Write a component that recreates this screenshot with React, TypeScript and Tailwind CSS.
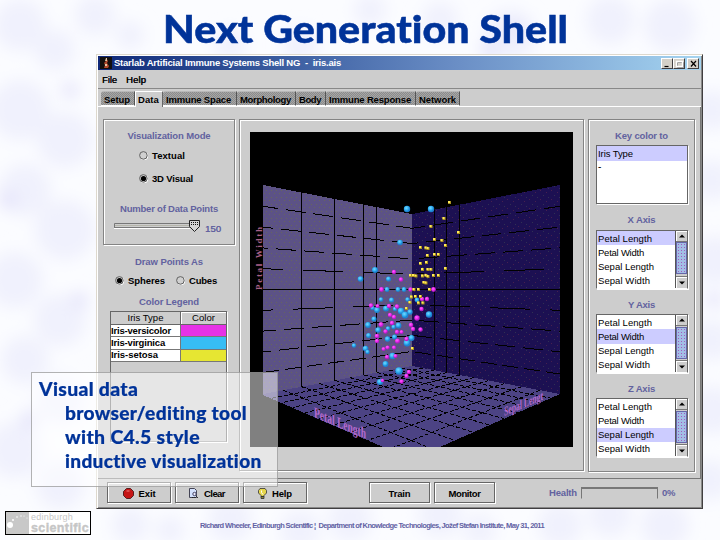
import { useLayoutEffect, useRef, useState } from "react";
import type { ReactNode } from "react";

/* Text whose tracking is adjusted so that it takes exactly `w` pixels. */
function Fit({ w, children, className = "" }: { w: number; children: string; className?: string }) {
  const ref = useRef<HTMLSpanElement>(null);
  const [gap, setGap] = useState(0);
  useLayoutEffect(() => {
    const el = ref.current;
    if (el) setGap((w - el.getBoundingClientRect().width) / children.length);
  }, [w, children]);
  return (
    <span ref={ref} className={`inline-block shrink-0 whitespace-pre ${className}`} style={{ letterSpacing: gap }}>
      {children}
    </span>
  );
}

/* Display text whose letters are widened to take exactly `w` pixels. */
function Wide({ w, children, className = "" }: { w: number; children: string; className?: string }) {
  const ref = useRef<HTMLSpanElement>(null);
  const [scale, setScale] = useState(1);
  useLayoutEffect(() => {
    if (ref.current) setScale(w / ref.current.offsetWidth);
  }, [w, children]);
  return (
    <span
      ref={ref}
      className={`inline-block shrink-0 origin-left self-start whitespace-pre [font-variant-ligatures:none] ${className}`}
      style={{ transform: `scaleX(${scale})` }}
    >
      {children}
    </span>
  );
}

const etched = "border border-[#848484] shadow-[1px_1px_0_#fff,inset_1px_1px_0_#fff]";

function Tab({ w, t, label, active = false }: { w: number; t: number; label: string; active?: boolean }) {
  return (
    <div
      className={
        active
          ? "flex h-[16px] items-center border-t border-l border-r border-t-white border-l-white border-r-[#666] bg-[#cdcdcd] pl-[2px]"
          : "flex h-[15px] items-center rounded-tl-[3px] border-t border-r border-t-[#b8b8b8] border-r-[#555] border-b border-b-white bg-[#999] bg-[repeating-conic-gradient(#8b8b8b_0_25%,#a6a6a6_0_50%)] bg-[length:2px_2px] pt-[2px] pl-[3px]"
      }
      style={{ width: w }}
    >
      <Fit w={t}>{label}</Fit>
    </div>
  );
}

function Heading({ w, children, className = "" }: { w: number; children: string; className?: string }) {
  return (
    <div className={`flex h-[12px] items-center justify-center pt-[2px] text-[#62629f] ${className}`}>
      <Fit w={w}>{children}</Fit>
    </div>
  );
}

function Radio({ on = false, w, label }: { on?: boolean; w: number; label: string }) {
  return (
    <div className="flex h-[12px] items-center gap-[4px]">
      <svg width="9" height="9" viewBox="0 0 9 9">
        <circle cx="5" cy="5" r="3.9" fill="none" stroke="#fff" />
        <circle cx="4.4" cy="4.4" r="3.8" fill="#d0d0d0" stroke="#555" strokeWidth="0.9" />
        {on && <circle cx="4.5" cy="4.5" r="2.6" fill="#000" />}
      </svg>
      <div className="flex pt-[1px]"><Fit w={w}>{label}</Fit></div>
    </div>
  );
}

function ScrollBar({ top }: { top: number }) {
  return (
    <div className="flex w-[12px] flex-col border-l border-[#555] bg-[#cdcdcd]">
      <div className="flex h-[11px] items-center justify-center border-b border-[#777] shadow-[inset_1px_1px_0_#fff]">
        <svg width="6" height="4"><path d="M0 3.5 3 0.5 6 3.5Z" /></svg>
      </div>
      <div className="flex-1" style={{ paddingTop: top }}>
        <div className="h-[32px] border border-[#6666aa] bg-[#8e98c8] bg-[radial-gradient(#a45cbc_0.7px,transparent_0.9px),radial-gradient(#a4bfe6_0.7px,transparent_1px)] bg-[length:3px_3px,2px_2px]" />
      </div>
      <div className="flex h-[12px] items-center justify-center border-t border-[#777] shadow-[inset_1px_1px_0_#fff]">
        <svg width="6" height="4"><path d="M0 0.5 3 3.5 6 0.5Z" /></svg>
      </div>
    </div>
  );
}

const AXES: [string, number][] = [["Petal Length", 54], ["Petal Width", 46], ["Sepal Length", 56], ["Sepal Width", 52]];

function AxisList({ selected, thumb }: { selected: number; thumb: number }) {
  return (
    <div className="ml-[7px] flex h-[59px] w-[92px] border border-[#666] border-b-white bg-white shadow-[1px_1px_0_#fff]">
      <div className="flex-1 font-normal">
        {AXES.map(([name, w], i) => (
          <div
            key={name}
            className={`flex h-[14.25px] items-center pt-[1px] pl-[1px] ${i === selected ? "bg-[#ccccff]" : ""}`}
          >
            <Fit w={w}>{name}</Fit>
          </div>
        ))}
      </div>
      <ScrollBar top={thumb} />
    </div>
  );
}

function Button({ w, t, label, icon }: { w: number; t: number; label: string; icon?: ReactNode }) {
  return (
    <div
      className="flex h-[21px] items-center justify-center gap-[5px] border border-[#666] pt-[2px] shadow-[1px_1px_0_#fff,inset_1px_1px_0_#fff]"
      style={{ width: w }}
    >
      {icon}
      <Fit w={t}>{label}</Fit>
    </div>
  );
}

/* Projective map of the unit square onto the floor: back, right, front, left corners. */
const floorPoint = (u: number, v: number): [number, number] => {
  const [x0, y0, x1, y1, x2, y2, x3, y3] = [412, 366, 560, 394, 411, 460, 263, 394];
  const sx = x0 - x1 + x2 - x3;
  const sy = y0 - y1 + y2 - y3;
  const d = (x1 - x2) * (y3 - y2) - (x3 - x2) * (y1 - y2);
  const g = (sx * (y3 - y2) - (x3 - x2) * sy) / d;
  const h = ((x1 - x2) * sy - sx * (y1 - y2)) / d;
  const k = g * u + h * v + 1;
  return [
    ((x1 - x0 + g * x1) * u + (x3 - x0 + h * x3) * v + x0) / k,
    ((y1 - y0 + g * y1) * u + (y3 - y0 + h * y3) * v + y0) / k,
  ];
};

const BLUE = [
  [407, 209, 3], [431, 209, 3], [400, 242.5, 2.6], [375, 270, 2.8], [360.5, 279, 2.6], [388.5, 279, 2.3],
  [387, 289.5, 2.2], [398, 289.5, 2.2], [404, 289.5, 2.2], [381, 299.5, 2], [391.5, 300, 2.3], [407.5, 299.5, 2], [417, 300, 2.2],
  [372.5, 308, 2], [377, 310, 2.7], [386, 308.5, 2.8], [395, 309, 2], [401, 311, 3], [405, 315, 3.2], [410, 312, 2.5], [429, 314.5, 3],
  [374, 319, 2.4], [368, 325, 2.7], [378, 330, 2.6], [388, 328.5, 2], [393.5, 327, 2], [398.5, 325.5, 2.7],
  [368.5, 335.5, 2.3], [387.5, 339, 2.5], [394.5, 337, 2.3], [411.5, 338, 2.8], [407, 343, 3.2], [354, 345.5, 2],
  [365.5, 348.5, 2.6], [367.5, 352, 2], [392.5, 356, 3], [385.5, 364, 2.7], [399, 371, 3.6], [380, 382, 2.8],
];
const PINK = [
  [394, 272, 2], [401, 279.5, 2], [381.5, 289.5, 2.2], [410.5, 289.5, 2], [433.5, 289.5, 2.2], [422, 299, 2], [427, 299, 2],
  [371, 305.5, 2], [377.5, 306, 1.8], [389, 306, 2], [397, 306.5, 2], [421.5, 309, 2], [390, 315, 2], [394, 317, 2], [417, 318, 2.5],
  [381, 324.5, 2.2], [392, 323, 2], [385.5, 331.5, 2], [397, 332, 2], [401.5, 332, 1.8], [411, 325, 2.1], [413, 329, 2], [420.5, 329.5, 2],
  [377, 336, 2.1], [377, 341, 2], [397.5, 341, 2.3], [406.5, 339, 2], [387.5, 347.5, 1.9], [383.5, 349, 1.8], [394, 347.5, 1.9],
  [387, 357, 2], [395.5, 356, 1.8], [409, 372, 2], [406.5, 376, 2], [401.5, 381.5, 2], [382.5, 380.5, 1.6],
];
const GOLD = [
  [449.5, 202.5], [444, 218.5], [431, 226.5], [458.5, 232.5], [434.5, 239.5], [442, 240.5], [445.5, 245.5], [420.5, 247.5],
  [426, 248], [428, 248.5], [427.5, 255.5], [434.5, 254.5], [438.5, 254.5], [420.5, 263.5], [426.5, 262.5], [422.5, 269.5],
  [428, 269.5], [431, 269.5], [445.5, 268.5], [410.5, 275.5], [413.5, 275.5], [416, 276], [422.5, 276], [426, 275.5],
  [428, 276.5], [433.5, 275.5], [438.5, 275.5], [424, 282.5], [426, 283], [414, 289.5], [418.5, 289.5], [429.5, 289.5],
  [411.5, 297], [415.5, 296.5], [420.5, 296.5], [410, 302.5], [418.5, 303], [423, 303], [406.5, 308.5], [412.5, 348.5],
];

function Plot() {
  const rows = [1, 2, 3, 4, 5, 6, 7, 8];
  const line = ([a, b]: [number, number], [c, d]: [number, number]) => `M${a} ${b}L${c} ${d}`;
  return (
    <svg width="323" height="315" viewBox="250 132 323 315" className="block bg-black">
      <defs>
        <pattern id="olive" width="5" height="7" patternUnits="userSpaceOnUse">
          <path d="M1 1h1v1h-1zM4 4h1v1h-1z" fill="#66665d" />
        </pattern>
        <pattern id="wine" width="11" height="9" patternUnits="userSpaceOnUse">
          <path d="M1 1h1v1h-1zM7 3h1v1h-1z" fill="#47204f" />
          <path d="M4 6h1v1h-1zM9 8h1v1h-1z" fill="#303053" />
        </pattern>
        <radialGradient id="blue" cx="40%" cy="35%">
          <stop offset="0" stopColor="#76d8ff" /><stop offset="0.6" stopColor="#35b3f3" /><stop offset="1" stopColor="#1c84d2" />
        </radialGradient>
        <radialGradient id="pink" cx="40%" cy="35%">
          <stop offset="0" stopColor="#ff66ff" /><stop offset="0.7" stopColor="#eb27ee" /><stop offset="1" stopColor="#b81cc8" />
        </radialGradient>
      </defs>
      <g shapeRendering="crispEdges">
        <path d="M263 185 412 214V366L263 394Z" fill="#5c5286" />
        <path d="M263 185 412 214V366L263 394Z" fill="url(#olive)" />
        <path d="M412 214 560 185V394L412 366Z" fill="#1c1052" />
        <path d="M412 214 560 185V394L412 366Z" fill="url(#wine)" />
        <path d="M412 366 560 394 440 447H383L263 395V394Z" fill="#4c4384" />
        <g stroke="#000" fill="none">
          {rows.map((i) => {
            const y = 185.5 + i * 20.8;
            const m = 213 + i * 15.3;
            return i === 5 ? (
              <path key={i} d="M263 289.5H560" />
            ) : (
              <g key={i} strokeDasharray={i === 4 || i === 6 ? "40 20" : "20 8"}>
                <path d={`M263 ${y}L412 ${m}`} strokeDashoffset={i * 5} />
                <path d={`M412 ${m}L560 ${y}`} strokeDashoffset={i * 7} />
              </g>
            );
          })}
          <path d="M263 372.5L412 351.5 560 374" strokeDasharray="16 6" />
          <path d="M301.5 192V387M334.5 199V381M363.5 204V375M376.5 207V372M434.5 210V370M446.5 207V373M459.5 205V375" />
          {[1, 2, 3, 4, 5, 6, 7, 8, 9].map((i) => (
            <g key={i} strokeDasharray="4 2">
              <path d={line(floorPoint(i / 10, 0), floorPoint(i / 10, 1))} />
              <path d={line(floorPoint(0, i / 10), floorPoint(1, i / 10))} />
            </g>
          ))}
        </g>
      </g>
      {BLUE.map(([x, y, r], i) => <circle key={i} cx={x} cy={y} r={r + 0.2} fill="url(#blue)" />)}
      {PINK.map(([x, y, r], i) => <circle key={i} cx={x} cy={y} r={r + 0.2} fill="url(#pink)" />)}
      {GOLD.map(([x, y], i) => (
        <g key={i}>
          <rect x={x - 1.5} y={y - 1.5} width="3" height="3" fill="#a8901f" />
          <rect x={x - 1.5} y={y - 1.5} width="2" height="2" fill="#ffea58" />
        </g>
      ))}
      <g fill="#b46ace" fontFamily="Liberation Serif, serif" fontSize="13">
        <text transform="translate(262 290) rotate(-90)" fontSize="9" textLength="63" fill="#a86088">Petal Width</text>
        <text transform="matrix(1 0.42 0 1 314 417)" textLength="52" lengthAdjust="spacingAndGlyphs" fontSize="15">Petal Length</text>
        <text transform="matrix(1 -0.42 0 1 504 416)" textLength="39" lengthAdjust="spacingAndGlyphs">Sepal Lengt</text>
      </g>
    </svg>
  );
}

const LEGEND: [string, number, string][] = [
  ["Iris-versicolor", 60, "bg-[#e632e6]"],
  ["Iris-virginica", 54, "bg-[#37bdf5]"],
  ["Iris-setosa", 47, "bg-[#e6e632]"],
];

function Backdrop() {
  return (
    <svg className="absolute inset-0" width="720" height="540">
      <defs>
        <filter id="soft" x="-50%" y="-50%" width="200%" height="200%"><feGaussianBlur stdDeviation="8" /></filter>
      </defs>
      <rect width="720" height="540" fill="#fbfcff" />
      <g filter="url(#soft)" fill="#f0f1fd">
        {[
          [20, 25, 26], [55, 50, 20], [95, 15, 20], [20, 110, 30], [65, 140, 28], [25, 190, 26], [65, 230, 30], [15, 280, 28],
          [60, 320, 26], [25, 360, 24], [60, 400, 24], [15, 450, 28], [60, 485, 24], [130, 525, 18], [170, 530, 14], [230, 520, 22],
          [300, 530, 20], [350, 520, 22], [440, 515, 22], [480, 530, 16], [560, 525, 22], [610, 515, 22], [665, 525, 24],
          [710, 480, 20], [712, 410, 24], [712, 340, 20], [715, 260, 24], [712, 180, 20], [712, 110, 20], [670, 25, 26],
          [610, 20, 24], [510, 35, 26], [440, 20, 18], [370, 10, 16], [300, 45, 18], [230, 45, 16], [130, 35, 14],
        ].map(([x, y, r], i) => <circle key={i} cx={x} cy={y} r={r} />)}
        <g fill="#e3e2fa">
          <circle cx="515" cy="30" r="9" /><circle cx="490" cy="50" r="9" /><circle cx="8" cy="200" r="9" /><circle cx="70" cy="90" r="8" />
          <circle cx="30" cy="420" r="9" /><circle cx="80" cy="300" r="8" /><circle cx="714" cy="300" r="8" />
        </g>
      </g>
    </svg>
  );
}

export default function App() {
  return (
    <div className="relative h-[540px] w-[720px] overflow-hidden bg-[#fafbff] font-['Liberation_Sans',sans-serif] text-[9.5px] leading-[12px] font-bold text-black">
      <Backdrop />
      <div className="relative flex h-full flex-col">
        <header className="flex h-[54px] pt-[5px] pl-[163px] font-['Lato',sans-serif] text-[37.5px] leading-[48px] font-black text-[#003399] [-webkit-text-stroke:0.5px_#003399]">
          <Wide w={405}>Next Generation Shell</Wide>
        </header>

        <main className="ml-[96px] flex h-[455px] w-[607px] flex-col border-t border-l border-r border-b border-t-[#ddd8cd] border-l-[#ddd8cd] border-r-[#403e40] border-b-[#403e40] bg-[#cdcdcd] shadow-[inset_1px_1px_0_#fff,inset_-1px_-1px_0_#888]">
          <div className="mx-[1px] mt-[1px] flex h-[14px] items-center bg-linear-to-r from-[#102878] via-[#6b8fc6] via-60% to-[#a5d4f0] text-white">
            <svg className="ml-[2px] mr-[2px]" width="12" height="12">
              <rect width="12" height="12" fill="#14100e" />
              <path d="M6 1 8 4 7 6 9 9 8 11H4L5 8 4 6 6 4Z" fill="#b3482c" />
              <path d="M6 1h1v3H5zM5 7h2v2H5z" fill="#e6c7a4" />
            </svg>
            <Fit w={227}>Starlab Artificial Immune Systems Shell NG  -  iris.ais</Fit>
            <div className="ml-auto flex pr-[2px]">
              {["M2.5 7.5h4", "M2.5 2.5h6v5h-6z", "M3 2 8 7.5M8 2 3 7.5"].map((d, i) => (
                <svg key={d} width="12" height="11" className={`border border-white border-r-[#403e40] border-b-[#403e40] bg-[#d4d0c8] ${i === 2 ? "ml-[2px]" : ""}`}>
                  {i === 1 && <path d="M3.5 3.5h6v5h-6z" fill="none" stroke="#888" />}
                  <path d={d} fill="none" stroke={i === 1 ? "#fff" : "#000"} strokeWidth={i === 1 ? 1.4 : 1.2} />
                </svg>
              ))}
            </div>
          </div>
          <nav className="mx-[1px] flex h-[19px] items-center gap-[9px] border-b border-[#888] pt-[2px] pl-[4px] text-[9.5px] font-normal [text-shadow:0.3px_0_0_#000]">
            <Fit w={15}>File</Fit>
            <Fit w={20}>Help</Fit>
          </nav>
          <div className="mx-[1px] flex h-[18px] items-end border-b border-white pl-[3px]">
            <Tab w={34} t={26} label="Setup" />
            <div className="-mb-[1px]"><Tab w={28} t={21} label="Data" active /></div>
            <Tab w={74} t={65} label="Immune Space" />
            <Tab w={59} t={51} label="Morphology" />
            <Tab w={30} t={22} label="Body" />
            <Tab w={90} t={82} label="Immune Response" />
            <Tab w={44} t={37} label="Network" />
          </div>

          <section className="mx-[1px] flex h-[372px] gap-[4px] border-r border-b border-[#777] pt-[12px] pl-[5px]">
            <div className="flex w-[132px] flex-col">
              <div className={`h-[126px] ${etched}`}>
                <Heading w={83} className="mt-[9px]">Visualization Mode</Heading>
                <div className="mt-[8px] flex flex-col gap-[11px] pl-[35px]">
                  <Radio w={33} label="Textual" />
                  <Radio on w={41} label="3D Visual" />
                </div>
                <Heading w={98} className="mt-[18px]">Number of Data Points</Heading>
                <div className="mt-[3px] flex items-center pl-[10px]">
                  <svg width="87" height="14">
                    <path d="M0.5 8V4.5H76" fill="none" stroke="#777" />
                    <path d="M1 6.5H76" stroke="#b5b5aa" />
                    <path d="M0 8.5H76" stroke="#777" />
                    <path d="M0 9.5H76" stroke="#fff" />
                    <path d="M75.5 1.5h10v6l-5 5-5-5z" fill="#d4d4d4" stroke="#222" />
                    <path d="M77 3.5h7M77 5.5h7" stroke="#111" strokeDasharray="1 1" />
                  </svg>
                  <span className="ml-[4px] flex pt-[6px] font-normal text-[#62629f] [text-shadow:0.3px_0_0_#62629f]"><Fit w={16}>150</Fit></span>
                </div>
              </div>
              <Heading w={68} className="mt-[10px]">Draw Points As</Heading>
              <div className="mt-[7px] flex gap-[11px] pl-[12px]">
                <Radio on w={37} label="Spheres" />
                <Radio w={28} label="Cubes" />
              </div>
              <Heading w={60} className="mt-[9px]">Color Legend</Heading>
              <div className="mt-[4px] ml-[7px] h-[131px] w-[117px] border border-[#666] border-b-[#999] shadow-[1px_1px_0_#fff]">
                <div className="flex h-[13px] border-b border-[#666] font-normal">
                  <div className="flex w-[70px] items-center justify-center border-r border-[#666]"><Fit w={36}>Iris Type</Fit></div>
                  <div className="flex flex-1 items-center justify-center shadow-[inset_1px_1px_0_#fff]"><Fit w={23}>Color</Fit></div>
                </div>
                {LEGEND.map(([name, w, color]) => (
                  <div key={name} className="flex h-[12.3px] w-[115px] border-b border-[#777] bg-white">
                    <div className="flex w-[70px] items-center border-r border-[#777]"><Fit w={w}>{name}</Fit></div>
                    <div className={`flex-1 ${color}`} />
                  </div>
                ))}
              </div>
            </div>

            <div className={`h-[352px] w-[345px] pt-[12px] pl-[10px] ${etched}`}>
              <Plot />
            </div>

            <div className={`h-[353px] w-[107px] ${etched}`}>
              <Heading w={53} className="mt-[9px]">Key color to</Heading>
              <div className="mt-[4px] ml-[7px] h-[59px] w-[92px] border border-[#666] bg-white font-normal shadow-[1px_1px_0_#fff]">
                <div className="flex h-[15px] items-center bg-[#ccccff] pl-[1px]"><Fit w={35}>Iris Type</Fit></div>
                <div className="pl-[1px] text-[10px]">-</div>
              </div>
              <Heading w={28} className="mt-[9px]">X Axis</Heading>
              <div className="mt-[5px]"><AxisList selected={0} thumb={0} /></div>
              <Heading w={27} className="mt-[9px]">Y Axis</Heading>
              <div className="mt-[4px]"><AxisList selected={1} thumb={1} /></div>
              <Heading w={27} className="mt-[9px]">Z Axis</Heading>
              <div className="mt-[4px]"><AxisList selected={2} thumb={1} /></div>
            </div>
          </section>

          <footer className="flex flex-1 items-start pt-[3px] pl-[10px]">
            <Button w={64} t={17} label="Exit" icon={
              <svg width="11" height="11"><path d="M3.5.5h4l3 3v4l-3 3h-4l-3-3v-4z" fill="#c51515" stroke="#542020" /><path d="M3.5 3h3" stroke="#f28080" /></svg>
            } />
            <div className="ml-[4px]" />
            <Button w={64} t={21} label="Clear" icon={
              <svg width="10" height="11"><path d="M.5.5h5l2 2v7h-7z" fill="#d4e2ff" stroke="#445" /><path d="m5 6 4 4M3 9.5h4" stroke="#222" strokeDasharray="1.5 .7" /><circle cx="5.5" cy="6" r="1.7" fill="#eef" stroke="#446" /></svg>
            } />
            <div className="ml-[4px]" />
            <Button w={64} t={20} label="Help" icon={
              <svg width="9" height="11"><path d="M2 .5h5l1.5 2V5L6 7.5v3H3v-3L.5 5V2.5z" fill="#e7d74c" stroke="#333" strokeWidth=".8" /><path d="M3.5 2.5v2l1.5 2" stroke="#fff" fill="none" /><path d="M3 8.5h3M3 10h3" stroke="#333" /></svg>
            } />
            <div className="ml-[62px]" />
            <Button w={61} t={22} label="Train" />
            <div className="ml-[4px]" />
            <Button w={61} t={32} label="Monitor" />
            <div className="mt-[5px] ml-[54px] flex items-center gap-[4px] text-[#62629f]">
              <Fit w={28}>Health</Fit>
              <div className="h-[12px] w-[77px] border border-t-2 border-[#777] border-b-[#cdcdcd]" />
              <Fit w={13}>0%</Fit>
            </div>
          </footer>
        </main>

        <div className="flex pt-[2px] pl-[5px]">
          <div className="flex h-[24px] w-[86px] items-stretch border border-black bg-white">
            <svg width="23" height="22" className="bg-[#c8c8c8]">
              <circle cx="4" cy="13" r="3" fill="#fff" />
              <g fill="#fff"><circle cx="7" cy="8" r="1" /><circle cx="11" cy="5" r=".8" /><circle cx="15" cy="4" r=".7" /><circle cx="18" cy="4" r=".6" /><circle cx="21" cy="6" r=".5" /></g>
            </svg>
            <div className="flex flex-col items-start pl-[2px] text-[#c6c6c6]">
              <Fit w={42} className="text-[9px] leading-[10px] font-normal">edinburgh</Fit>
              <Fit w={58} className="text-[12.5px] leading-[12px] font-black [-webkit-text-stroke:0.4px_#c6c6c6]">scientific</Fit>
            </div>
          </div>
          <div className="mt-[9px] ml-[109px] text-[7.5px] leading-[12px] text-[#6262a4]">
            <Fit w={344}>Richard Wheeler, Edinburgh Scientific ¦  Department of Knowledge Technologies, Jožef Stefan Institute, May 31, 2011</Fit>
          </div>
        </div>
      </div>

      <aside className="absolute top-[372px] left-[31px] flex h-[115px] w-[247px] flex-col border border-[#808080]/60 bg-white/50 pt-[4px] pl-[7px] font-['Lato',sans-serif] text-[18px] leading-[24px] font-black tracking-[0.3px] text-[#003399] [-webkit-text-stroke:0.2px_#003399]">
        <Wide w={99}>Visual data</Wide>
        <Wide w={182} className="ml-[26px]">browser/editing tool</Wide>
        <Wide w={135} className="ml-[26px]">with C4.5 style</Wide>
        <Wide w={197} className="ml-[26px]">inductive visualization</Wide>
      </aside>
    </div>
  );
}
